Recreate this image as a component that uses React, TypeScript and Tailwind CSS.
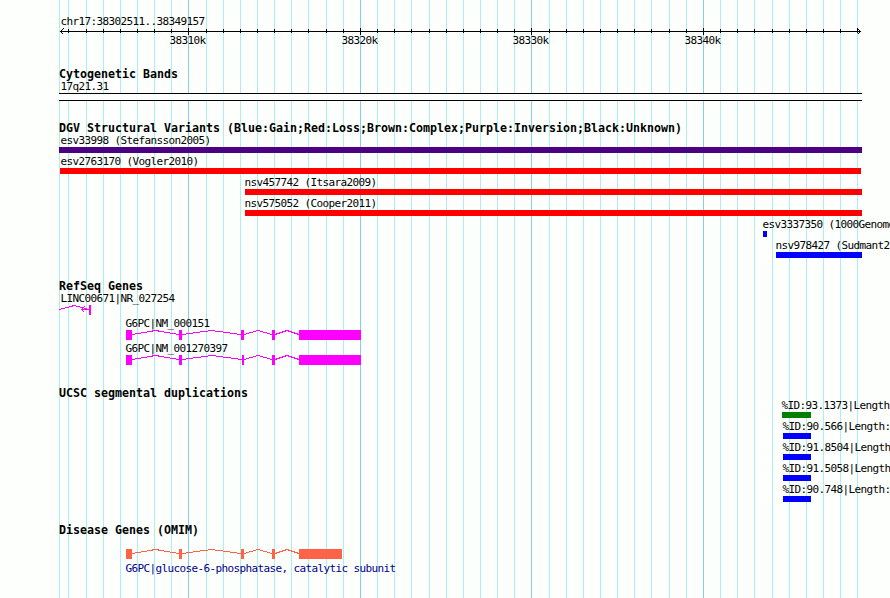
type Feature = { label: string; labelX: number; x: number; width: number; color: string };
type Exon = [x: number, width: number];

const gridLines = [
  59, 68, 86, 103, 120, 137, 154, 171, 206, 223, 240, 257, 274, 291, 308, 326, 343,
  377, 394, 411, 429, 446, 463, 480, 497, 514, 549, 566, 583, 600, 617, 634, 651,
  669, 686, 720, 737, 754, 772, 789, 806, 823, 840, 857,
];

const majorLines = [
  { x: 188, label: "38310k" },
  { x: 360, label: "38320k" },
  { x: 531, label: "38330k" },
  { x: 703, label: "38340k" },
];

const variants: Feature[] = [
  { label: "esv33998 (Stefansson2005)", labelX: 60, x: 59, width: 803, color: "bg-[#4b0082]" },
  { label: "esv2763170 (Vogler2010)", labelX: 60, x: 60, width: 801, color: "bg-[#ff0000]" },
  { label: "nsv457742 (Itsara2009)", labelX: 244, x: 245, width: 617, color: "bg-[#ff0000]" },
  { label: "nsv575052 (Cooper2011)", labelX: 244, x: 245, width: 617, color: "bg-[#ff0000]" },
  { label: "esv3337350 (1000Genome", labelX: 762, x: 763, width: 4, color: "bg-[#0000ff]" },
  { label: "nsv978427 (Sudmant2", labelX: 775, x: 776, width: 86, color: "bg-[#0000ff]" },
];

const duplications: Feature[] = [
  { label: "%ID:93.1373|Length", labelX: 781, x: 782, width: 29, color: "bg-[#008000]" },
  { label: "%ID:90.566|Length:", labelX: 782, x: 783, width: 28, color: "bg-[#0000ff]" },
  { label: "%ID:91.8504|Length", labelX: 782, x: 783, width: 28, color: "bg-[#0000ff]" },
  { label: "%ID:91.5058|Length", labelX: 782, x: 783, width: 28, color: "bg-[#0000ff]" },
  { label: "%ID:90.748|Length:", labelX: 782, x: 783, width: 28, color: "bg-[#0000ff]" },
];

function Label({ text, x, className = "" }: { text: string; x: number; className?: string }) {
  return (
    <div
      className={`h-3 pl-[0.4px] text-[11px] leading-[14px] tracking-[-0.622px] whitespace-pre ${className}`}
      style={{ marginLeft: x }}
    >
      {text}
    </div>
  );
}

function Title({ children }: { children: string }) {
  return (
    <h2 className="ml-[59px] h-3 text-[11.63px] leading-3 font-bold whitespace-pre">{children}</h2>
  );
}

function Bars({ features }: { features: Feature[] }) {
  return (
    <div>
      {features.map((f) => (
        <div key={f.label} className="h-[21px]">
          <Label text={f.label} x={f.labelX} />
          <div className={`mt-px h-1.5 ${f.color}`} style={{ marginLeft: f.x, width: f.width }} />
        </div>
      ))}
    </div>
  );
}

// Exons are boxes, the introns between them are peaked lines
function Gene({ exons, color }: { exons: Exon[]; color: string }) {
  return (
    <svg width="890" height="10" className="block" shapeRendering="crispEdges">
      {exons.map(([x, w], i) => {
        const next = exons[i + 1];
        const end = x + w;
        return (
          <g key={x}>
            <rect x={x} y="0" width={w} height="10" fill={color} />
            {next && (
              <path
                d={`M${end} 4.5 L${(end + next[0]) / 2} .5 L${next[0]} 4.5`}
                fill="none"
                stroke={color}
              />
            )}
          </g>
        );
      })}
    </svg>
  );
}

function Ruler() {
  return (
    <>
      <svg width="890" height="7" className="block overflow-visible" shapeRendering="crispEdges">
        <rect x="60" y="4" width="801" height="1" />
        {gridLines.slice(1).map((x) => (
          <rect key={x} x={x} y="2" width="1" height="4" />
        ))}
        {majorLines.map(({ x }) => (
          <rect key={x} x={x} y="1" width="1" height="7" />
        ))}
        <path d="M63.5 1.5 L60.5 4.5 L63.5 7.5 M857.5 1.5 L860.5 4.5 L857.5 7.5" fill="none" stroke="black" />
      </svg>
      <div className="grid h-3 grid-cols-[169px_172px_171px_172px_1fr]">
        <span />
        {majorLines.map((m) => (
          <Label key={m.x} text={m.label} x={0} />
        ))}
      </div>
    </>
  );
}

export default function App() {
  return (
    <div className="relative h-[598px] w-[890px] overflow-hidden bg-[#fdfffc] font-['DejaVu_Sans_Mono',monospace] text-black">
      <svg width="890" height="598" className="absolute inset-0" shapeRendering="crispEdges">
        {gridLines.map((x) => (
          <rect key={x} x={x} y="0" width="1" height="598" fill="#afeeee" />
        ))}
        {majorLines.map(({ x }) => (
          <rect key={x} x={x} y="0" width="1" height="598" fill="#87ceeb" />
        ))}
      </svg>

      <main className="relative pt-[15px]">
        <section>
          <Label text="chr17:38302511..38349157" x={60} />
          <Ruler />
        </section>

        <section className="mt-[22px]">
          <Title>Cytogenetic Bands</Title>
          <Label text="17q21.31" x={60} />
          <div className="mt-px ml-[59px] h-2 w-[803px] border-y border-black bg-[#fdfffc]" />
        </section>

        <section className="mt-[21px]">
          <Title>DGV Structural Variants (Blue:Gain;Red:Loss;Brown:Complex;Purple:Inversion;Black:Unknown)</Title>
          <Bars features={variants} />
        </section>

        <section className="mt-5">
          <Title>RefSeq Genes</Title>
          <Label text="LINC00671|NR_027254" x={60} />
          <svg width="890" height="10" className="mt-px block" shapeRendering="crispEdges">
            <path
              d="M59 4.5 L74.5 .5 L89 4.5 M81 4.5 H89 M84.5 1.5 L81.5 4.5 L84.5 7.5"
              fill="none"
              stroke="#ff00ff"
            />
            <rect x="89" y="0" width="2" height="10" fill="#ff00ff" />
          </svg>
          <div className="mt-0.5">
            <Label text="G6PC|NM_000151" x={125} />
            <div className="mt-px">
              <Gene color="#ff00ff" exons={[[126, 6], [179, 3], [241, 3], [272, 3], [299, 62]]} />
            </div>
          </div>
          <div className="mt-0.5">
            <Label text="G6PC|NM_001270397" x={125} />
            <div className="mt-px">
              <Gene color="#ff00ff" exons={[[126, 6], [179, 3], [242, 2], [272, 3], [299, 62]]} />
            </div>
          </div>
        </section>

        <section className="mt-[22px]">
          <Title>UCSC segmental duplications</Title>
          <Bars features={duplications} />
        </section>

        <section className="mt-5">
          <Title>Disease Genes (OMIM)</Title>
          <div className="mt-[13px]">
            <Gene color="#ff6347" exons={[[126, 6], [179, 3], [241, 3], [272, 3], [299, 43]]} />
          </div>
          <Label text="G6PC|glucose-6-phosphatase, catalytic subunit" x={125} className="mt-[3px] text-[#00008b]" />
        </section>
      </main>
    </div>
  );
}
